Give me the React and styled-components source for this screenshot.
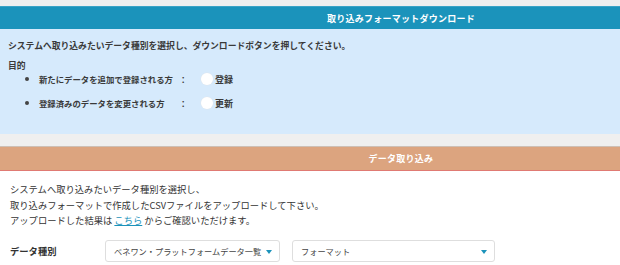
import React from 'react';
import styled, { createGlobalStyle } from 'styled-components';

const GlobalStyle = createGlobalStyle`
  body {
    margin: 0;
    background: #efefef;
    overflow: hidden;
    font-family: "Noto Sans CJK JP", "Noto Sans", sans-serif;
    color: #333;
  }
`;

const purposes = [
  { label: '新たにデータを追加で登録される方', value: '登録' },
  { label: '登録済みのデータを変更される方', value: '更新' }
];

const App = () => (
  <>
    <GlobalStyle />
    <Page>
      <BlueHeader>取り込みフォーマットダウンロード</BlueHeader>
      <DownloadPanel>
        <Lead>システムへ取り込みたいデータ種別を選択し、ダウンロードボタンを押してください。</Lead>
        <Purpose>目的</Purpose>
        <PurposeList>
          {purposes.map(item => (
            <PurposeItem key={item.value}>
              <PurposeLabel>{item.label}</PurposeLabel>
              <Colon>：</Colon>
              <RadioWrap>
                <Radio />
                {item.value}
              </RadioWrap>
            </PurposeItem>
          ))}
        </PurposeList>
      </DownloadPanel>

      <OrangeHeader>データ取り込み</OrangeHeader>
      <UploadPanel>
        <Notes>
          システムへ取り込みたいデータ種別を選択し、
          <br />
          取り込みフォーマットで作成したCSVファイルをアップロードして下さい。
          <br />
          アップロードした結果は <Link href="#">こちら</Link> からご確認いただけます。
        </Notes>
        <FormRow>
          <FieldLabel>データ種別</FieldLabel>
          <Select width={175}>
            ベネワン・プラットフォームデータ一覧
            <Caret />
          </Select>
          <Select width={203}>
            フォーマット
            <Caret />
          </Select>
        </FormRow>
      </UploadPanel>
    </Page>
  </>
);

export default App;

const Page = styled.div`
  width: 802px;
  padding-top: 6px;
`;

const Header = styled.div`
  color: #fff;
  font-size: 9px;
  font-weight: 700;
  letter-spacing: 0.25px;
  text-align: center;
  display: flex;
  align-items: center;
  justify-content: center;
`;

const BlueHeader = styled(Header)`
  background: #1b93bb;
  border-top: 1px solid #3aa3c6;
  height: 22px;
`;

const DownloadPanel = styled.div`
  background: #d6eafc;
  height: 105px;
  box-sizing: border-box;
  padding: 10px 8px 0;
  font-size: 8.8px;
  font-weight: 700;
  color: #3a3a3a;
  margin-bottom: 12px;
`;

const Lead = styled.div`
  line-height: 14px;
`;

const Purpose = styled.div`
  margin-top: 6px;
  line-height: 14px;
`;

const PurposeList = styled.ul`
  list-style: none;
  margin: -6px 0 0;
  padding: 0 0 0 17px;
`;

const PurposeItem = styled.li`
  display: flex;
  align-items: center;
  height: 24px;
  font-size: 8.4px;
  white-space: nowrap;

  &:before {
    content: '';
    flex: none;
    width: 4px;
    height: 4px;
    border-radius: 50%;
    background: #444;
    margin-right: 10px;
  }
`;

const PurposeLabel = styled.span`
  flex: none;
  width: 140px;
`;

const Colon = styled.span`
  flex: none;
  width: 22px;
`;

const RadioWrap = styled.label`
  display: flex;
  align-items: center;
  gap: 2px;
  font-size: 9px;
`;

const Radio = styled.span`
  width: 12px;
  height: 12px;
  border-radius: 50%;
  background: #fff;
  box-shadow: 0 0 0 0.5px #dfe7ee;
`;

const OrangeHeader = styled(Header)`
  background: #dca47f;
  border-top: 1px solid #cdbfb5;
  height: 23px;
  border-bottom: 1px solid #e07a73;
  box-shadow: 0 1px 0 #f6c4c1;
`;

const UploadPanel = styled.div`
  background: #fff;
  padding: 11px 10px 20px;
  font-size: 9.3px;
  color: #333;
`;

const Notes = styled.div`
  line-height: 15.5px;
`;

const Link = styled.a`
  color: #1b93bb;
  text-decoration: underline;
`;

const FormRow = styled.div`
  display: flex;
  align-items: center;
  margin-top: 11px;
`;

const FieldLabel = styled.span`
  width: 95px;
  font-weight: 700;
`;

const Select = styled.div`
  position: relative;
  width: ${props => props.width}px;
  height: 22px;
  box-sizing: border-box;
  margin-right: 12px;
  padding-left: 8px;
  display: flex;
  align-items: center;
  background: #fff;
  border: 1px solid #dedede;
  border-radius: 3px;
  font-size: 8.2px;
  color: #444;
  white-space: nowrap;
`;

const Caret = styled.span`
  position: absolute;
  right: 7px;
  top: 9px;
  border-left: 3px solid transparent;
  border-right: 3px solid transparent;
  border-top: 4px solid #1b93bb;
`;
